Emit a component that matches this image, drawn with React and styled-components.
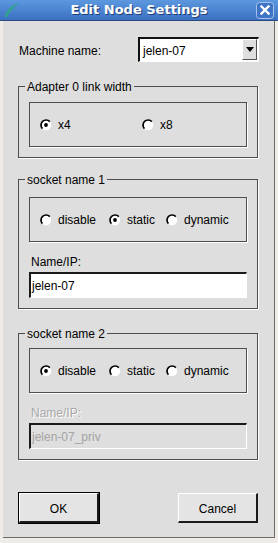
import React from "react";
import styled, { createGlobalStyle } from "styled-components";

const SANS = `"Liberation Sans", Arial, Helvetica, sans-serif`;
const PANEL = "#dedede";
const LINE = "#4d4d4d";

const GlobalStyle = createGlobalStyle`
  html, body { margin: 0; padding: 0; }
  body { background: #efebe7; font-family: ${SANS}; }
`;

const Window = styled.div`
  width: 278px;
  height: 543px;
  background: #efebe7;
  display: flex;
  flex-direction: column;
  font-family: ${SANS};
  font-size: 12px;
  color: #000;
  box-sizing: border-box;
`;

const TitleBar = styled.div`
  height: 20px;
  border-bottom: 1px solid #2b4a7e;
  background: linear-gradient(#5c98de, #3b70c2);
  display: grid;
  grid-template-columns: 1fr auto 1fr;
  align-items: center;
`;

const TitleIcon = styled.svg`
  margin-left: 3px;
  display: block;
`;

const TitleText = styled.div`
  font-family: "DejaVu Sans", Verdana, sans-serif;
  font-weight: bold;
  font-size: 13px;
  line-height: 20px;
  color: #fff;
  text-shadow: 1px 1px 0 #1f3e72;
  white-space: nowrap;
`;

const CloseBtn = styled.svg`
  justify-self: end;
  margin-right: 4px;
  display: block;
`;

const Body = styled.div`
  flex: 1;
  margin: 0 3px 5px;
  background: ${PANEL};
  border-right: 1px solid #6e6a64;
  border-bottom: 1px solid #6e6a64;
  padding: 16px 0 0 15px;
  display: flex;
  flex-direction: column;
`;

const MachineRow = styled.div`
  display: grid;
  grid-template-columns: 120px 121px;
  align-items: center;
  height: 25px;
`;

const RowLabel = styled.span`
  padding-left: 1px;
  padding-top: 2px;
`;

const Combo = styled.div`
  display: flex;
  height: 25px;
  box-sizing: border-box;
  background: #fff;
  border-style: solid;
  border-width: 2px 1px 1px 2px;
  border-color: #111 #fff #fff #111;
`;

const ComboText = styled.div`
  flex: 1;
  padding: 2px 0 0 3px;
  display: flex;
  align-items: center;
`;

const ArrowButton = styled.div`
  width: 15px;
  margin: 0 1px 1px 0;
  box-sizing: border-box;
  background: ${PANEL};
  border-style: solid;
  border-width: 1px;
  border-color: #fff #555 #555 #fff;
  display: flex;
  align-items: center;
  justify-content: center;
`;

const Group = styled.div`
  position: relative;
  width: 240px;
  box-sizing: border-box;
  border: 1px solid ${LINE};
  box-shadow: 1px 1px 0 #fff;
  margin-top: ${(p) => p.$mt}px;
  padding: ${(p) => p.$pt}px 10px 10px;
`;

const Legend = styled.span`
  position: absolute;
  top: -7px;
  left: 6px;
  padding: 0 2px;
  background: ${PANEL};
  line-height: 14px;
  white-space: nowrap;
`;

const RadioBox = styled.div`
  height: 45px;
  box-sizing: border-box;
  border: 1px solid ${LINE};
  box-shadow: 1px 1px 0 #fff;
  display: flex;
  align-items: center;
  padding-left: 10px;
`;

const RadioItem = styled.label`
  display: flex;
  align-items: center;
  gap: 6px;
  flex-shrink: 0;
  width: ${(p) => (p.$w ? `${p.$w}px` : "auto")};
  white-space: nowrap;
`;

const FieldLabel = styled.div`
  margin: 13px 0 3px 2px;
  line-height: 14px;
  color: ${(p) => (p.$disabled ? "#a8a8a8" : "#000")};
  text-shadow: ${(p) => (p.$disabled ? "1px 1px 0 #fff" : "none")};
`;

const Field = styled.div`
  height: 26px;
  box-sizing: border-box;
  border-style: solid;
  border-width: 2px 1px 1px 2px;
  border-color: #1a1a1a #fff #fff #1a1a1a;
  background: ${(p) => (p.$disabled ? PANEL : "#fff")};
  color: ${(p) => (p.$disabled ? "#a4a4a4" : "#000")};
  padding: 1px 0 0 1px;
  display: flex;
  align-items: center;
`;

const ButtonRow = styled.div`
  width: 240px;
  box-sizing: border-box;
  padding: 0 0 0 1px;
  margin-top: 33px;
  display: flex;
  justify-content: space-between;
`;

const Button = styled.div`
  width: 80px;
  height: 30px;
  box-sizing: border-box;
  background: #e4e4e4;
  border-style: solid;
  border-width: 1px 2px 2px 1px;
  border-color: #fff #1a1a1a #1a1a1a #fff;
  box-shadow: ${(p) => (p.$default ? "0 0 0 1px #000" : "none")};
  display: flex;
  align-items: center;
  justify-content: center;
  padding-top: 2px;
`;

function Radio({ checked }) {
  return (
    <svg width="12" height="12" viewBox="0 0 12 12">
      <circle cx="6" cy="6" r="5.2" fill="#fff" />
      <path d="M9.8 2.6 A5 5 0 0 0 2.4 9.6" fill="none" stroke="#000" strokeWidth="1.7" />
      {checked && <circle cx="6" cy="6" r="1.9" fill="#000" />}
    </svg>
  );
}

function RadioOpt({ label, checked, w }) {
  return (
    <RadioItem $w={w}>
      <Radio checked={checked} />
      <span>{label}</span>
    </RadioItem>
  );
}

function SocketGroup({ title, mt, pt, selected, value, disabled }) {
  return (
    <Group $mt={mt} $pt={pt}>
      <Legend>{title}</Legend>
      <RadioBox>
        <RadioOpt label="disable" w={69} checked={selected === "disable"} />
        <RadioOpt label="static" w={57} checked={selected === "static"} />
        <RadioOpt label="dynamic" checked={selected === "dynamic"} />
      </RadioBox>
      <FieldLabel $disabled={disabled}>Name/IP:</FieldLabel>
      <Field $disabled={disabled}>{value}</Field>
    </Group>
  );
}

export default function App() {
  return (
    <>
      <GlobalStyle />
      <Window>
        <TitleBar>
          <TitleIcon width="16" height="16" viewBox="0 0 16 16">
            <path
              d="M1.5 15 C3 10 6 5.5 11 3 C12.5 2.2 14 1.8 15.5 1.6 L14.2 3 C12.5 3.6 11.2 4.6 10.6 5.6 L12.6 6.4 L9.6 6.8 C7.6 9 5.4 12 3.6 15.4 Z"
              fill="#2fa38e"
            />
          </TitleIcon>
          <TitleText>Edit Node Settings</TitleText>
          <CloseBtn width="18" height="17" viewBox="0 0 18 17">
            <rect x="0.5" y="0.5" width="17" height="16" rx="3" fill="#3d74c6" stroke="#a9c4ec" />
            <path d="M5.5 4.5 L12.5 11.5 M12.5 4.5 L5.5 11.5" stroke="#fff" strokeWidth="2.4" strokeLinecap="square" />
          </CloseBtn>
        </TitleBar>
        <Body>
          <MachineRow>
            <RowLabel>Machine name:</RowLabel>
            <Combo>
              <ComboText>jelen-07</ComboText>
              <ArrowButton>
                <svg width="8" height="5" viewBox="0 0 8 5">
                  <path d="M0 0 H8 L4 5 Z" fill="#000" />
                </svg>
              </ArrowButton>
            </Combo>
          </MachineRow>

          <Group $mt={24} $pt={15}>
            <Legend>Adapter 0 link width</Legend>
            <RadioBox>
              <RadioOpt label="x4" w={102} checked />
              <RadioOpt label="x8" />
            </RadioBox>
          </Group>

          <SocketGroup title="socket name 1" mt={21} pt={17} selected="static" value="jelen-07" />
          <SocketGroup title="socket name 2" mt={24} pt={14} selected="disable" value="jelen-07_priv" disabled />

          <ButtonRow>
            <Button $default>OK</Button>
            <Button>Cancel</Button>
          </ButtonRow>
        </Body>
      </Window>
    </>
  );
}
